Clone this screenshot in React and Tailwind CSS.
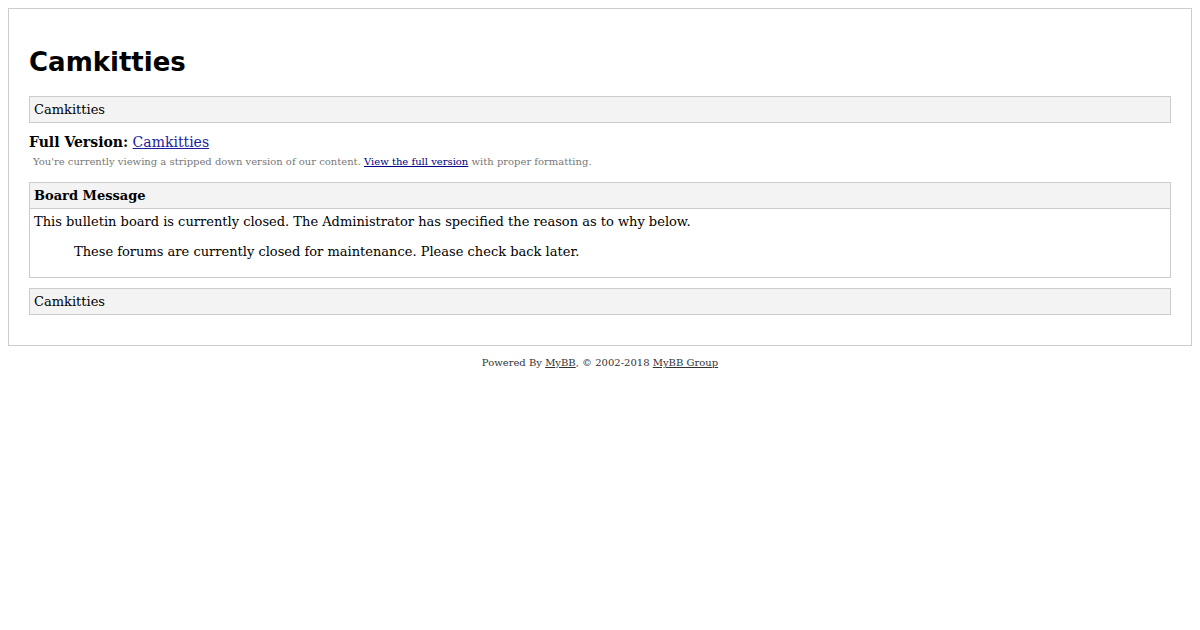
import React from 'react';

const serif = "font-['DejaVu_Serif',serif]";

const Box = ({ children, className = '' }) => (
  <div className={`border border-[#ccc] bg-[#f3f3f3] px-[4px] py-[4px] text-[13px] leading-[17px] ${className}`}>
    {children}
  </div>
);

export default function App() {
  return (
    <div className={`${serif} min-h-[630px] bg-white text-black`}>
      <div className="mx-[8px] pt-[8px]">
        <div className="border border-[#ccc] px-[20px] pb-[30px] pt-[20px]">
          <h1 className="mb-[16px] mt-[16px] font-['DejaVu_Sans',sans-serif] text-[26px] font-bold leading-[35px]">
            Camkitties
          </h1>

          <Box>Camkitties</Box>

          <div className="mt-[11px] text-[14px] leading-[17px]">
            <strong>Full Version:</strong>{' '}
            <a href="#" className="text-[#1c1c9c] underline">Camkitties</a>
          </div>
          <div className="mt-[5px] pl-[4px] text-[10px] leading-[12px] text-[#777]">
            You're currently viewing a stripped down version of our content.{' '}
            <a href="#" className="text-[#000080] underline">View the full version</a> with proper formatting.
          </div>

          <div className="mt-[14px] border border-[#ccc] text-[13px] leading-[17px]">
            <div className="border-b border-[#ccc] bg-[#f3f3f3] px-[4px] py-[4px] font-bold">
              Board Message
            </div>
            <div className="p-[4px]">
              <div>This bulletin board is currently closed. The Administrator has specified the reason as to why below.</div>
              <div className="mb-[13px] ml-[40px] mt-[13px]">
                These forums are currently closed for maintenance. Please check back later.
              </div>
            </div>
          </div>

          <Box className="mt-[10px]">Camkitties</Box>
        </div>

        <div className="mt-[11px] text-center text-[10px] leading-[12px] text-[#333]">
          Powered By <a href="#" className="underline">MyBB</a>, © 2002-2018{' '}
          <a href="#" className="underline">MyBB Group</a>
        </div>
      </div>
    </div>
  );
}
